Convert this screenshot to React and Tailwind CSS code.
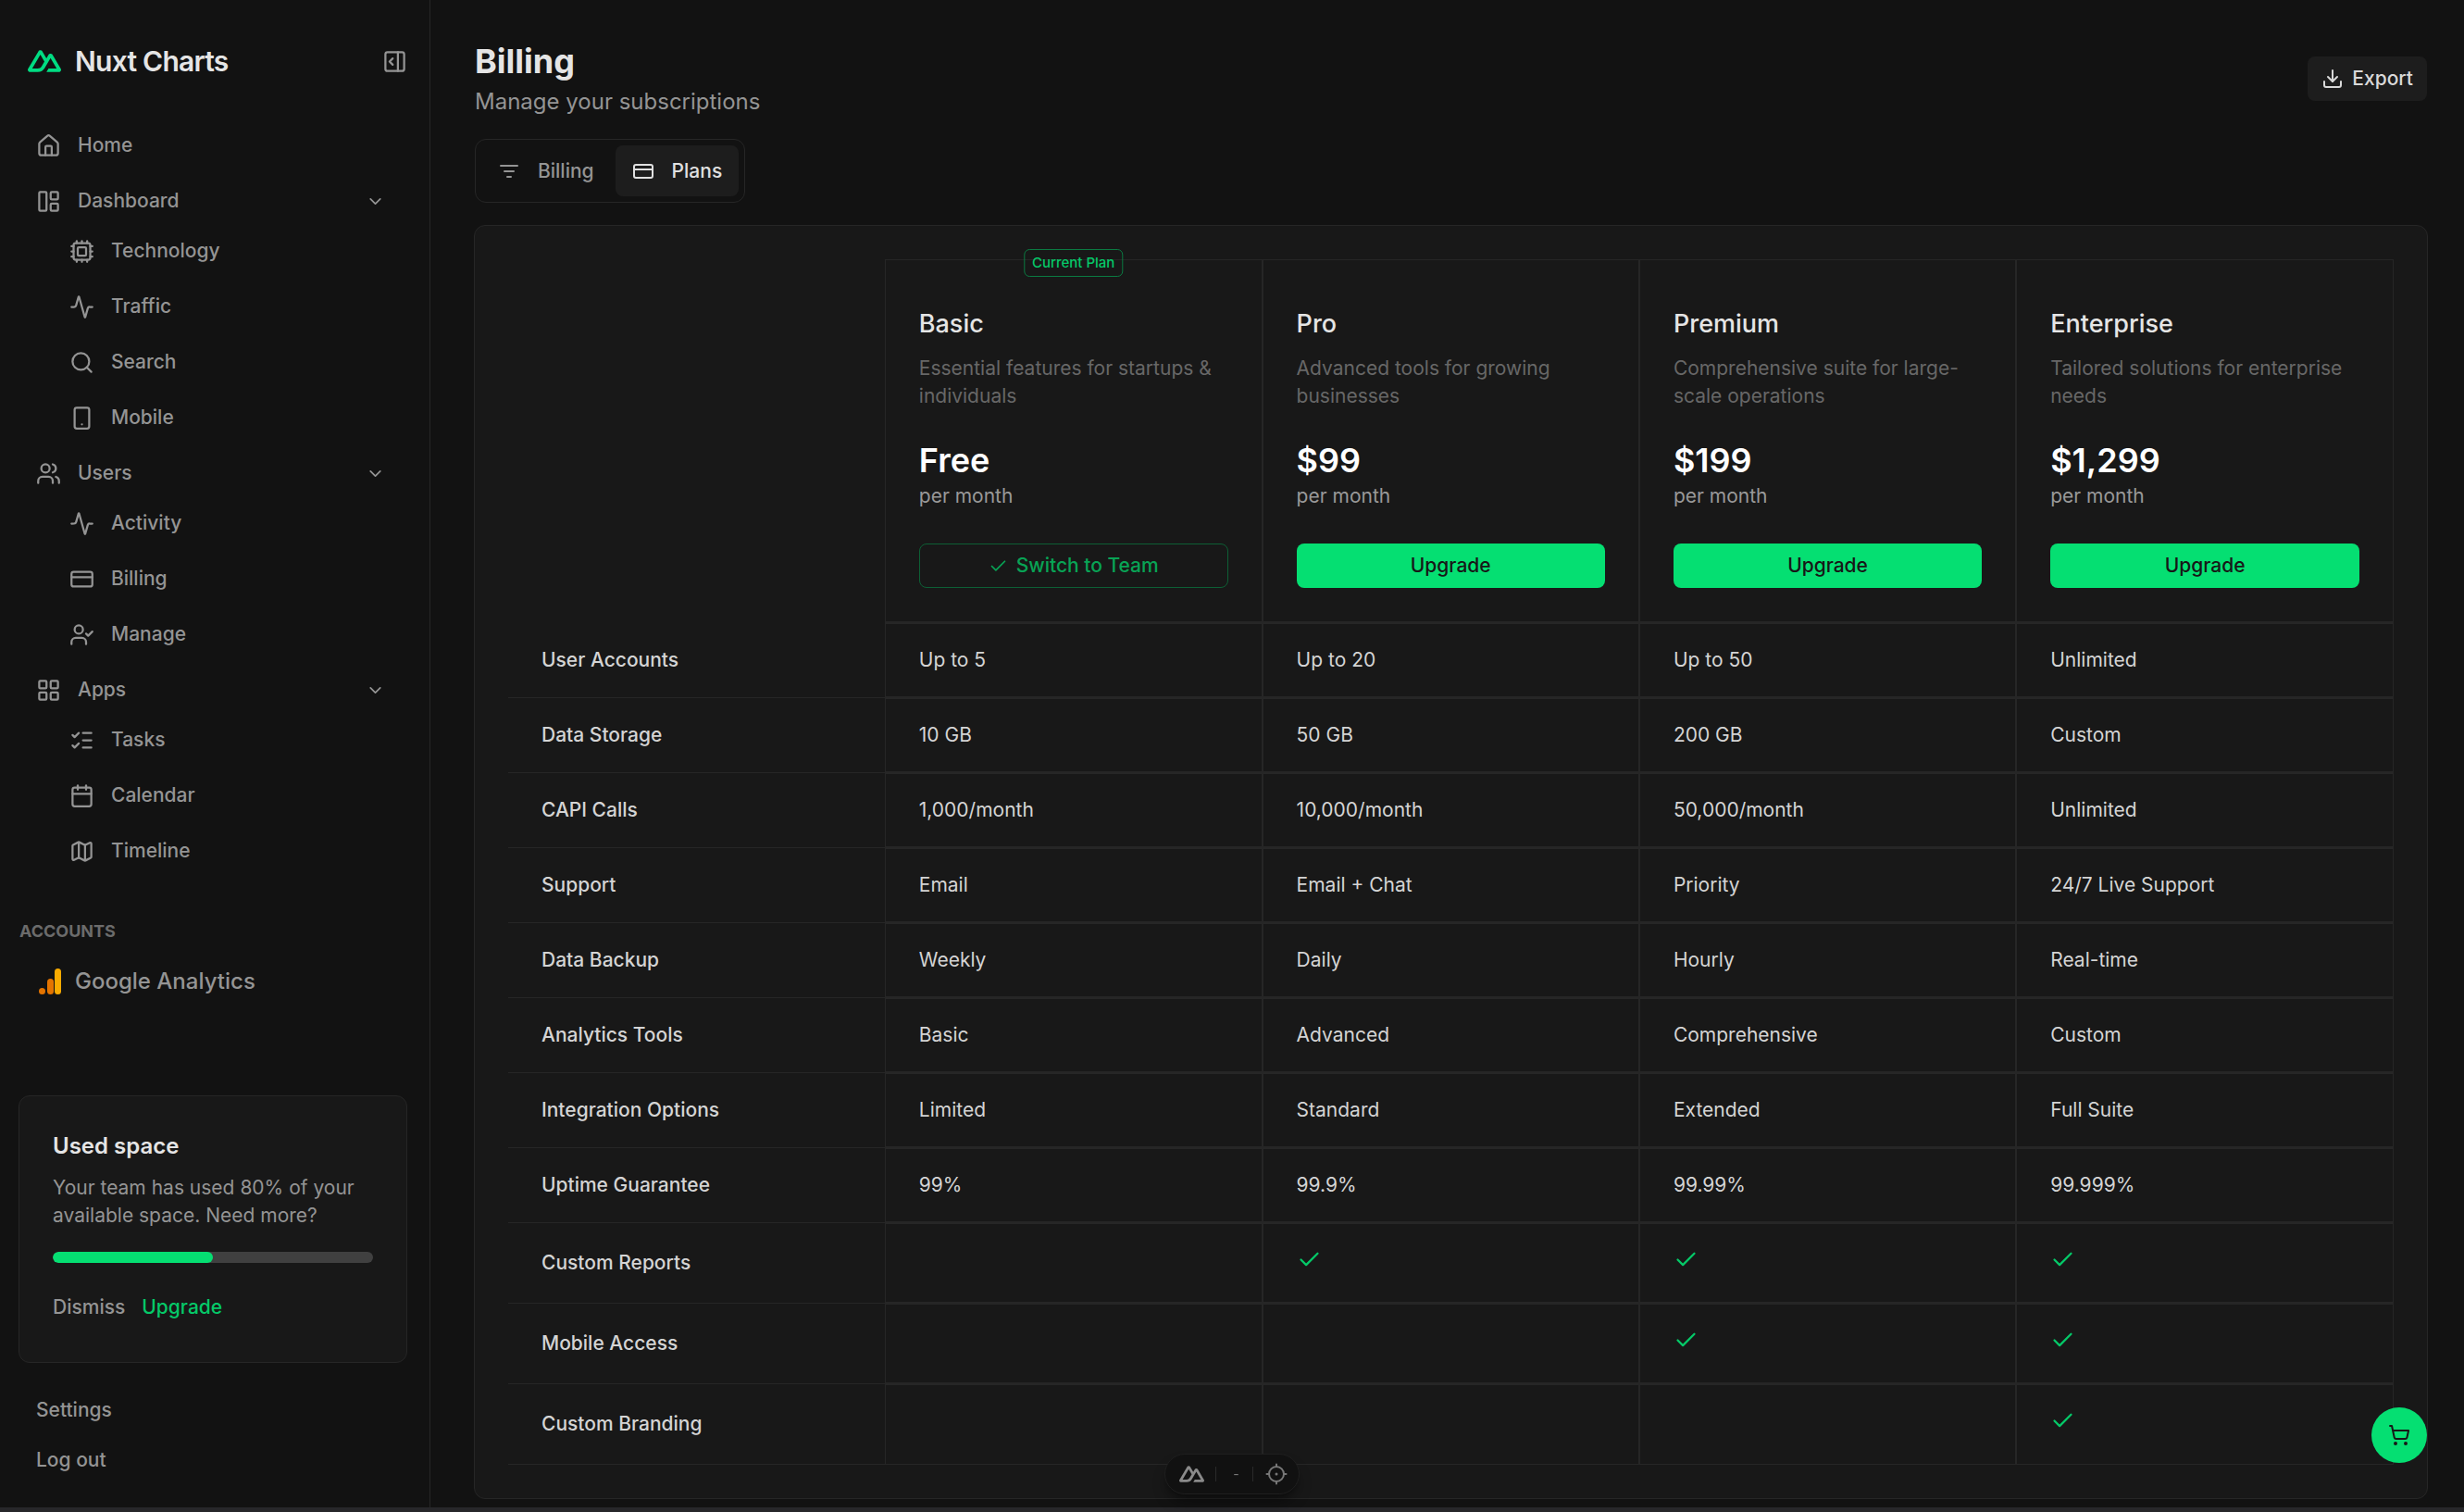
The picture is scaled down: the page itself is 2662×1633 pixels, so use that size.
import {
  Activity,
  Calendar,
  Check,
  ChevronDown,
  Cpu,
  CreditCard,
  Download,
  House,
  LayoutGrid,
  LayoutPanelLeft,
  ListChecks,
  Map as MapIcon,
  PanelRightOpen,
  Search,
  ShoppingCart,
  Smartphone,
  UserCheck,
  Users,
} from "lucide-react";

function FilterIcon() {
  return (
    <svg className="size-6" viewBox="0 0 24 24" fill="none" stroke="currentColor" strokeWidth="2" strokeLinecap="round" aria-hidden="true">
      <path d="M3 6h18M7 12h10M10 18h4" />
    </svg>
  );
}

function NuxtLogo({ className }) {
  return (
    <svg className={className} viewBox="0 4 24 16" fill="currentColor" aria-hidden="true">
      <path d="M13.4642 19.8295h8.9218c.2834 0 .5618-.0723.8072-.2098a1.5899 1.5899 0 0 0 .5908-.5732 1.5293 1.5293 0 0 0 .216-.783 1.529 1.529 0 0 0-.2167-.7828L17.7916 7.4142a1.5904 1.5904 0 0 0-.5907-.573 1.6524 1.6524 0 0 0-.807-.2099c-.2833 0-.5616.0724-.807.2098a1.5904 1.5904 0 0 0-.5907.5731L13.4642 9.99l-2.9954-5.0366a1.5913 1.5913 0 0 0-.591-.573 1.6533 1.6533 0 0 0-.8071-.2098c-.2834 0-.5617.0723-.8072.2097a1.5913 1.5913 0 0 0-.591.573L.2168 17.4808A1.5292 1.5292 0 0 0 0 18.2635c-.0001.2749.0744.545.216.783a1.59 1.59 0 0 0 .5908.5732c.2454.1375.5238.2098.8072.2098h5.6003c2.2189 0 3.8552-.966 4.9811-2.8506l2.7335-4.6918 1.4642-2.5108 4.3942 7.5426h-5.8583l-1.4648 2.5102ZM7.123 17.3169l-3.9083-.0009 5.8586-10.0562 2.9232 5.0281-1.9572 3.3606c-.7478 1.2229-1.5972 1.6684-2.9162 1.6684Z" />
    </svg>
  );
}

function AnalyticsLogo() {
  return (
    <svg className="h-7 w-6" viewBox="0 0 24 28" aria-hidden="true">
      <circle cx="3.5" cy="24.5" r="3.5" fill="#e37400" />
      <rect x="9" y="11" width="7" height="17" rx="3.5" fill="#e37400" />
      <rect x="17" y="0" width="7" height="28" rx="3.5" fill="#f9ab00" />
    </svg>
  );
}

function TargetIcon() {
  return (
    <svg className="size-6" viewBox="0 0 24 24" fill="none" stroke="currentColor" strokeWidth="2" strokeLinecap="round" aria-hidden="true">
      <circle cx="12" cy="12" r="8" />
      <path d="M12 1.500V4M12 20v2.500M1.500 12H4M20 12h2.500" />
      <circle cx="12" cy="12" r="1.500" fill="currentColor" stroke="none" />
    </svg>
  );
}

const navigation = [
  { label: "Home", icon: House },
  {
    label: "Dashboard",
    icon: LayoutPanelLeft,
    children: [
      { label: "Technology", icon: Cpu },
      { label: "Traffic", icon: Activity },
      { label: "Search", icon: Search },
      { label: "Mobile", icon: Smartphone },
    ],
  },
  {
    label: "Users",
    icon: Users,
    children: [
      { label: "Activity", icon: Activity },
      { label: "Billing", icon: CreditCard },
      { label: "Manage", icon: UserCheck },
    ],
  },
  {
    label: "Apps",
    icon: LayoutGrid,
    children: [
      { label: "Tasks", icon: ListChecks },
      { label: "Calendar", icon: Calendar },
      { label: "Timeline", icon: MapIcon },
    ],
  },
];

const plans = [
  { name: "Basic", text: "Essential features for startups & individuals", price: "Free", current: true },
  { name: "Pro", text: "Advanced tools for growing businesses", price: "$99" },
  { name: "Premium", text: "Comprehensive suite for large-scale operations", price: "$199" },
  { name: "Enterprise", text: "Tailored solutions for enterprise needs", price: "$1,299" },
];

const features = [
  ["User Accounts", "Up to 5", "Up to 20", "Up to 50", "Unlimited"],
  ["Data Storage", "10 GB", "50 GB", "200 GB", "Custom"],
  ["CAPI Calls", "1,000/month", "10,000/month", "50,000/month", "Unlimited"],
  ["Support", "Email", "Email + Chat", "Priority", "24/7 Live Support"],
  ["Data Backup", "Weekly", "Daily", "Hourly", "Real-time"],
  ["Analytics Tools", "Basic", "Advanced", "Comprehensive", "Custom"],
  ["Integration Options", "Limited", "Standard", "Extended", "Full Suite"],
  ["Uptime Guarantee", "99%", "99.9%", "99.99%", "99.999%"],
  ["Custom Reports", false, true, true, true],
  ["Mobile Access", false, false, true, true],
  ["Custom Branding", false, false, false, true],
];

function NavItem({ item }) {
  const Icon = item.icon;
  if (!item.children) {
    return (
      <li>
        <a href="#" className="flex h-12 items-center gap-[18px]">
          <Icon className="size-[27px] shrink-0" />
          {item.label}
        </a>
      </li>
    );
  }
  return (
    <li>
      <button type="button" aria-expanded="true" className="flex h-12 w-full items-center gap-[18px] pr-6">
        <Icon className="size-[27px] shrink-0" />
        {item.label}
        <ChevronDown className="ml-auto size-[21px]" />
      </button>
      <ul className="mt-1.5 flex flex-col gap-3 pl-9">
        {item.children.map((child) => (
          <NavItem key={child.label} item={child} />
        ))}
      </ul>
    </li>
  );
}

function Sidebar() {
  return (
    <aside className="flex w-[465px] shrink-0 flex-col border-r border-[#262626] pt-12 pb-6 text-[21px] leading-[30px] font-medium text-[#949494]">
      <div className="flex h-9 items-center pr-6 pl-[30px]">
        <NuxtLogo className="w-9 text-[#00dc82]" />
        <span className="ml-[15px] text-[30px] leading-9 font-semibold tracking-tight text-[#e5e5e5]">Nuxt Charts</span>
        <button type="button" aria-label="Collapse sidebar" className="ml-auto">
          <PanelRightOpen className="size-[27px]" />
        </button>
      </div>

      <nav aria-label="Main" className="mt-[49px] pr-6 pl-[39px]">
        <ul className="flex flex-col gap-3">
          {navigation.map((item) => (
            <NavItem key={item.label} item={item} />
          ))}
        </ul>
      </nav>

      <h2 className="mt-[51px] pl-[21px] text-lg leading-6 font-bold text-[#6b6b6b]">ACCOUNTS</h2>
      <a href="#" className="mt-[18px] flex h-12 items-center gap-[15px] pl-[42px] text-2xl">
        <AnalyticsLogo />
        Google Analytics
      </a>

      <section className="mr-6 ml-5 mt-auto rounded-xl border border-[#262626] bg-[#181818] p-9">
        <h2 className="text-2xl leading-9 font-semibold text-[#e5e5e5]">Used space</h2>
        <p className="mt-3 font-normal">Your team has used 80% of your available space. Need more?</p>
        <div role="progressbar" aria-label="Used space" aria-valuenow={50} className="mt-6 h-3 overflow-hidden rounded-full bg-[#404040]">
          <div className="h-full w-1/2 rounded-full bg-green-400" />
        </div>
        <div className="mt-[33px] mb-2 flex gap-[18px]">
          <button type="button">Dismiss</button>
          <button type="button" className="text-[#05c968]">Upgrade</button>
        </div>
      </section>

      <div className="mt-6 flex flex-col pl-[39px]">
        <a href="#" className="flex h-[54px] items-center">Settings</a>
        <a href="#" className="flex h-[54px] items-center">Log out</a>
      </div>
    </aside>
  );
}

function PlanHeader({ plan }) {
  return (
    <div className="relative flex flex-col px-9 pt-[51px] pb-9 text-left text-[21px] leading-[30px] font-normal">
      {plan.current && (
        <span className="absolute -top-3 left-1/2 flex h-[30px] -translate-x-1/2 items-center rounded-md border border-[#0b7a42] px-2 text-[15px] leading-5 font-medium whitespace-nowrap text-[#05c968]">
          Current Plan
        </span>
      )}
      <h2 className="text-[27px] leading-9 font-medium text-[#e5e5e5]">{plan.name}</h2>
      <p className="mt-[15px] max-w-[331px] text-[#676767]">{plan.text}</p>
      <strong className="mt-[30px] text-4xl leading-[48px] font-semibold text-white">{plan.price}</strong>
      <span className="text-[#999999]">per month</span>
      {plan.current ? (
        <button type="button" className="mt-9 flex h-12 items-center justify-center gap-[9px] rounded-lg border border-[#0d5f35] font-medium text-[#08a355]">
          <Check className="size-[21px]" />
          Switch to Team
        </button>
      ) : (
        <button type="button" className="mt-9 flex h-12 items-center justify-center rounded-lg bg-green-400 font-medium text-[#171717]">
          Upgrade
        </button>
      )}
    </div>
  );
}

function PlansTable() {
  return (
    <table className="w-full table-fixed border-collapse text-left text-[21px] leading-[30px] text-[#d4d4d4]">
      <thead>
        <tr>
          <td />
          {plans.map((plan) => (
            <th key={plan.name} scope="col" className="border-x-2 border-t border-b-3 border-[#262626] p-0 align-top first-of-type:border-l last-of-type:border-r">
              <PlanHeader plan={plan} />
            </th>
          ))}
        </tr>
      </thead>
      <tbody>
        {features.map(([label, ...values], row) => (
          <tr key={label} className={row < 8 ? "h-[81px]" : "h-[87px]"}>
            <th scope="row" className="border-b border-[#262626] px-9 py-0 font-medium">{label}</th>
            {values.map((value, column) => (
              <td key={column} className={`border-x-2 border-[#262626] px-9 py-0 first-of-type:border-l last-of-type:border-r ${row < features.length - 1 ? "border-b-3" : "border-b"}`}>
                {value === true ? (
                  <Check className="mb-2 size-[27px] text-[#05c968]" aria-label="Included" />
                ) : (
                  value
                )}
              </td>
            ))}
          </tr>
        ))}
      </tbody>
    </table>
  );
}

export default function App() {
  return (
    <div className="flex min-h-screen flex-col bg-[#121212] font-['Inter',sans-serif]">
      <div className="flex flex-1">
        <Sidebar />
        <main className="min-w-0 flex-1 pt-[41px] pr-10 pb-[9px] pl-12">
          <header className="flex items-start justify-between">
            <div>
              <h1 className="text-4xl leading-[51px] font-bold text-[#e5e5e5]">Billing</h1>
              <p className="text-2xl leading-9 text-[#949494]">Manage your subscriptions</p>
            </div>
            <button type="button" className="mt-5 flex h-12 items-center gap-[9px] rounded-lg bg-[#1d1d1d] px-[15px] text-[21px] font-medium text-[#d9d9d9]">
              <Download className="size-6" />
              Export
            </button>
          </header>

          <div role="tablist" className="mt-[22px] flex w-fit gap-[5px] rounded-xl border border-[#262626] p-1.5 text-[21px] leading-[30px] font-medium">
            <button type="button" role="tab" aria-selected="false" className="flex h-[55px] items-center gap-[19px] rounded-lg px-[18px] text-[#949494]">
              <FilterIcon />
              Billing
            </button>
            <button type="button" role="tab" aria-selected="true" className="flex h-[55px] items-center gap-[19px] rounded-lg bg-[#1d1d1d] px-[18px] text-[#e0e0e0]">
              <CreditCard className="size-6" />
              Plans
            </button>
          </div>

          <section aria-label="Plans" className="-mx-px mt-6 rounded-xl border border-[#262626] bg-[#181818] p-9">
            <PlansTable />
          </section>
        </main>
      </div>
      <div className="h-[5px] bg-[#27272a]" />

      <button type="button" aria-label="Open cart" className="fixed right-10 bottom-[53px] flex size-[60px] items-center justify-center rounded-full bg-green-400 text-[#171717]">
        <ShoppingCart className="size-6" />
      </button>

      <div className="fixed bottom-[19px] left-1/2 flex h-11 -translate-x-1/2 items-center rounded-full border border-[#1f1f1f] bg-[#111111] pr-3 pl-[15px] shadow-lg shadow-black/40">
        <NuxtLogo className="w-[27px] text-[#8a8a8a]" />
        <span className="ml-3 h-4 w-px bg-[#2a2a2a]" />
        <span className="w-[39px] pl-1 text-center text-sm text-[#777777]">-</span>
        <span className="mr-[13px] h-4 w-px bg-[#2a2a2a]" />
        <span className="text-[#777777]">
          <TargetIcon />
        </span>
      </div>
    </div>
  );
}
